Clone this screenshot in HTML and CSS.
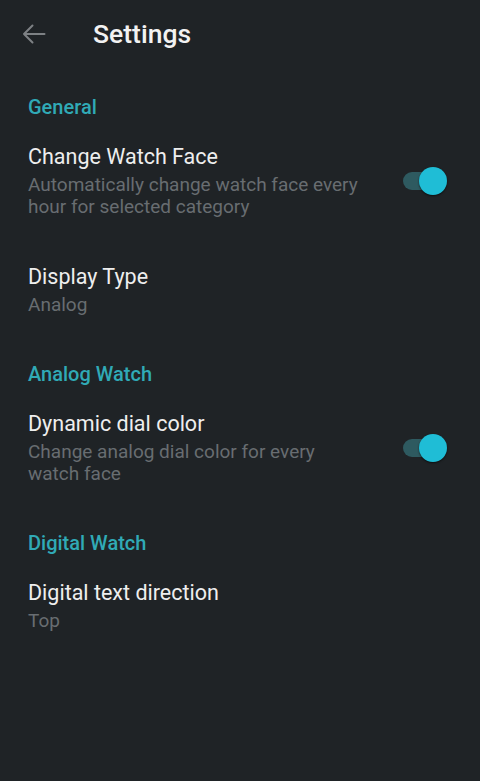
FILE: index.html
```html
<!DOCTYPE html>
<html>
<head>
<meta charset="utf-8">
<link rel="stylesheet" href="styles.css">
</head>
<body>
<div class="screen">
  <header class="appbar">
    <svg class="back" width="24" height="24" viewBox="0 0 24 24"><path d="M22.5 12H2M10.5 3.5L2 12l8.5 8.5" fill="none" stroke="#7d8184" stroke-width="2" stroke-linecap="round" stroke-linejoin="round"/></svg>
    <h1 class="title">Settings</h1>
  </header>

  <section class="group">
    <h2 class="group-title">General</h2>
    <div class="row">
      <div class="text">
        <div class="label">Change Watch Face</div>
        <div class="summary">Automatically change watch face every hour for selected category</div>
      </div>
      <div class="switch"><span class="track"></span><span class="thumb"></span></div>
    </div>
    <div class="row">
      <div class="text">
        <div class="label">Display Type</div>
        <div class="summary">Analog</div>
      </div>
    </div>
  </section>

  <section class="group">
    <h2 class="group-title">Analog Watch</h2>
    <div class="row">
      <div class="text">
        <div class="label">Dynamic dial color</div>
        <div class="summary">Change analog dial color for every watch face</div>
      </div>
      <div class="switch"><span class="track"></span><span class="thumb"></span></div>
    </div>
  </section>

  <section class="group">
    <h2 class="group-title">Digital Watch</h2>
    <div class="row">
      <div class="text">
        <div class="label">Digital text direction</div>
        <div class="summary">Top</div>
      </div>
    </div>
  </section>
</div>
</body>
</html>
```

FILE: styles.css
```css
html, body {
  margin: 0;
  padding: 0;
  background: #1f2326;
}
body {
  font-family: Roboto, "Noto Sans", sans-serif;
  width: 480px;
  height: 781px;
  overflow: hidden;
}
.screen {
  display: flex;
  flex-direction: column;
}
.appbar {
  height: 68px;
  padding-bottom: 2px;
  display: flex;
  align-items: center;
  padding-left: 22px;
}
.back {
  width: 24px;
  height: 24px;
}
.title {
  margin: 0 0 0 47px;
  font-size: 26.5px;
  font-weight: 500;
  color: #f2f2f2;
  line-height: 32px;
}
.group {
  padding: 0 28px;
}
.group-title {
  margin: 0;
  padding-top: 23px;
  font-size: 20px;
  font-weight: 500;
  color: #30aab6;
  line-height: 26px;
}
.group:first-of-type .group-title {
  padding-top: 24px;
}
.row {
  display: flex;
  align-items: center;
  padding: 23px 0 22px;
}
.text {
  flex: 1;
  max-width: 340px;
}
.label {
  font-size: 21.5px;
  color: #eeeeee;
  line-height: 28px;
}
.summary {
  font-size: 19px;
  color: #686d71;
  line-height: 22px;
  margin-top: 3px;
}
.switch {
  position: relative;
  width: 48px;
  height: 30px;
  margin-left: auto;
  margin-right: 3px;
}
.track {
  position: absolute;
  left: 2px;
  top: 6px;
  width: 38px;
  height: 18px;
  border-radius: 9px;
  background: #2e5a60;
}
.thumb {
  position: absolute;
  left: 18px;
  top: 1px;
  width: 28px;
  height: 28px;
  border-radius: 50%;
  background: #1fbdd6;
  box-shadow: 0 1px 2px rgba(0,0,0,0.6);
}
```
